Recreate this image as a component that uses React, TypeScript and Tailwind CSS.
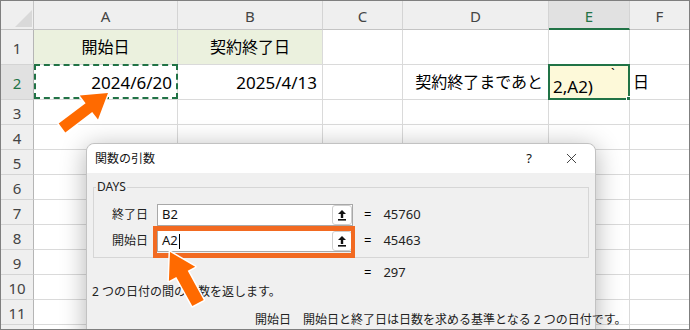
import React from "react";
import { X } from "lucide-react";

type Align = "left" | "center" | "right";
type CellData = { text: string; align: Align; fill?: boolean; num?: boolean };

const cols = ["A", "B", "C", "D", "E", "F"];
const rows = [1, 2, 3, 4, 5, 6, 7, 8, 9, 10, 11, 12];

const data: Record<string, CellData> = {
  A1: { text: "開始日", align: "center", fill: true },
  B1: { text: "契約終了日", align: "center", fill: true },
  A2: { text: "2024/6/20", align: "right", num: true },
  B2: { text: "2025/4/13", align: "right", num: true },
  D2: { text: "契約終了まであと", align: "right" },
  F2: { text: "日", align: "left" },
};

const alignClass: Record<Align, string> = {
  left: "justify-start pl-[3px]",
  center: "justify-center",
  right: "justify-end pr-[5px]",
};

function Cell({ col, row }: { col: string; row: number }) {
  const key = `${col}${row}`;
  const d = data[key];
  const last = col === "F";

  if (key === "E2") {
    return (
      <div className="relative border-r border-b border-[#dadada]">
        <div className="absolute -top-px -left-px right-[-1px] bottom-[-1px] border-2 border-[#217346] bg-[#fdf9d9] flex items-center pl-[3px] pt-[8px] text-[17px] leading-none">
          2,A2)
          <span className="absolute left-[61px] top-[1px] text-[13px] leading-none">`</span>
          <span className="absolute -right-[3px] -bottom-[3px] w-[5px] h-[5px] bg-[#217346] border border-white" />
        </div>
      </div>
    );
  }

  return (
    <div
      className={`relative flex items-center whitespace-nowrap leading-none border-b border-[#dadada] ${
        d?.num ? "text-[17px]" : "text-[16px]"
      } ${last ? "" : "border-r"} ${d?.fill ? "bg-[#ebf1de]" : ""} ${d ? alignClass[d.align] : ""}`}
    >
      {d?.text}
      {key === "A2" && (
        <div className="absolute -top-px left-0 right-[-1px] bottom-0 border-2 border-dashed border-[#217346]" />
      )}
    </div>
  );
}

function Sheet() {
  return (
    <div className="grid grid-cols-[33px_144px_145px_80px_146px_81px_59px] grid-rows-[29px_35px_35px_repeat(10,25px)]">
      <div className="relative bg-[#efefef] border-r border-b border-[#c4c4c4]">
        <svg className="absolute left-[14px] top-[9px]" width="17" height="17" viewBox="0 0 17 17">
          <polygon points="17,0 17,17 0,17" fill="#d9d9d9" />
        </svg>
      </div>
      {cols.map((c) => (
        <div
          key={c}
          className={`flex items-center justify-center pt-[3px] text-[15px] ${
            c === "E"
              ? "bg-[#e1e1e1] text-[#217346] border-b-2 border-b-[#217346] border-r border-r-[#d4d4d4]"
              : "bg-[#efefef] text-[#444] border-b border-b-[#c4c4c4] border-r border-r-[#d4d4d4]"
          } ${c === "F" ? "border-r-0" : ""}`}
        >
          {c}
        </div>
      ))}
      {rows.map((r) => (
        <React.Fragment key={r}>
          <div
            className={`flex items-center justify-center pt-[2px] text-[15px] border-r border-r-[#b5b5b5] border-b border-b-[#d4d4d4] ${
              r === 2 ? "bg-[#e1e1e1] text-[#217346]" : "bg-[#efefef] text-[#444]"
            }`}
          >
            {r < 12 ? r : ""}
          </div>
          {cols.map((c) => (
            <Cell key={c} col={c} row={r} />
          ))}
        </React.Fragment>
      ))}
    </div>
  );
}

function RefButton() {
  return (
    <div className="w-[20px] h-[20px] rounded-[3px] border border-[#cfcfcf] bg-white flex items-center justify-center">
      <svg width="10" height="12" viewBox="0 0 10 12">
        <polygon points="5,1 9,5 6.2,5 6.2,9 3.8,9 3.8,5 1,5" fill="#111" />
        <rect x="1" y="10" width="8" height="1.6" fill="#111" />
      </svg>
    </div>
  );
}

function ArgRow({ label, value, result, cursor }: { label: string; value: string; result: string; cursor?: boolean }) {
  return (
    <div className="flex items-center h-[22px]">
      <div className="w-[54px] text-right text-[12px] text-[#222]">{label}</div>
      <div className="ml-[9px] w-[196px] h-[22px] border border-[#a8a8a8] bg-white flex items-center">
        <div className="flex-1 pl-[4px] text-[13px] text-[#111] flex items-center">
          {value}
          {cursor && <span className="ml-[1px] w-px h-[15px] bg-black" />}
        </div>
        <RefButton />
      </div>
      <span className="ml-[11px] text-[13px]">=</span>
      <span className="ml-[12px] text-[13px] text-[#222]">{result}</span>
    </div>
  );
}

function Dialog() {
  return (
    <div className="absolute left-[85px] top-[142px] w-[510px] h-[200px] rounded-t-[8px] border border-[#c2c2c2] bg-[#f0f0f0] shadow-[0_4px_26px_rgba(0,0,0,0.3)]">
      <div className="h-[29px] bg-white rounded-t-[8px] flex items-center justify-between pl-[8px] pr-[15px]">
        <span className="text-[12px] text-[#111]">関数の引数</span>
        <div className="flex items-center gap-[31px]">
          <span className="text-[13px] text-[#111]">?</span>
          <X size={17} strokeWidth={1.2} color="#222" />
        </div>
      </div>
      <div className="relative ml-[6px] mt-[14px] w-[496px] h-[71px] border border-[#d6d6d6] pt-[16px]">
        <span className="absolute -top-[9px] left-[2px] bg-[#f0f0f0] px-[1px] text-[12px] leading-[16px] text-[#222]">
          DAYS
        </span>
        <div className="flex flex-col gap-[4px]">
          <ArgRow label="終了日" value="B2" result="45760" />
          <ArgRow label="開始日" value="A2" result="45463" cursor />
        </div>
      </div>
      <div className="mt-[7px] ml-[277px] flex items-center h-[16px] text-[13px]">
        <span>=</span>
        <span className="ml-[12px] text-[#222]">297</span>
      </div>
      <div className="mt-[3px] ml-[5px] h-[16px] flex items-center text-[12px] text-[#222]">
        2 つの日付の間の日数を返します。
      </div>
      <div className="mt-[12px] ml-[168px] h-[16px] flex items-center gap-[12px] text-[12px] text-[#222] whitespace-nowrap">
        <span>開始日</span>
        <span>開始日と終了日は日数を求める基準となる 2 つの日付です。</span>
      </div>
      <div className="absolute left-[66px] top-[82px] w-[202px] h-[32px] border-x-[4px] border-y-[5px] border-[#f26a21]" />
    </div>
  );
}

function arrowPoints(tx: number, ty: number, hx: number, hy: number, sw: number, hw: number, hl: number) {
  const dx = hx - tx;
  const dy = hy - ty;
  const len = Math.hypot(dx, dy);
  const ux = dx / len;
  const uy = dy / len;
  const px = -uy;
  const py = ux;
  const bx = hx - ux * hl;
  const by = hy - uy * hl;
  const pts = [
    [tx + (px * sw) / 2, ty + (py * sw) / 2],
    [bx + (px * sw) / 2, by + (py * sw) / 2],
    [bx + (px * hw) / 2, by + (py * hw) / 2],
    [hx, hy],
    [bx - (px * hw) / 2, by - (py * hw) / 2],
    [bx - (px * sw) / 2, by - (py * sw) / 2],
    [tx - (px * sw) / 2, ty - (py * sw) / 2],
  ];
  return pts.map((p) => p.map((v) => v.toFixed(1)).join(",")).join(" ");
}

function Arrows() {
  return (
    <svg className="absolute -left-px -top-px pointer-events-none" width="690" height="330" viewBox="0 0 690 330">
      <polygon
        points={arrowPoints(62, 128, 108, 93, 11, 30, 24)}
        fill="#ff6a00"
        stroke="#fff"
        strokeWidth="3"
        strokeLinejoin="round"
        paintOrder="stroke"
      />
      <polygon
        points={arrowPoints(198, 303, 170, 252, 13, 30, 25)}
        fill="#ff6a00"
        stroke="#fff"
        strokeWidth="3"
        strokeLinejoin="round"
        paintOrder="stroke"
      />
    </svg>
  );
}

export default function App() {
  return (
    <div className="relative w-[690px] h-[330px] overflow-hidden border border-[#7f7f7f] bg-white font-['Noto_Sans','Noto_Sans_CJK_JP',sans-serif] text-black">
      <Sheet />
      <Dialog />
      <Arrows />
    </div>
  );
}
